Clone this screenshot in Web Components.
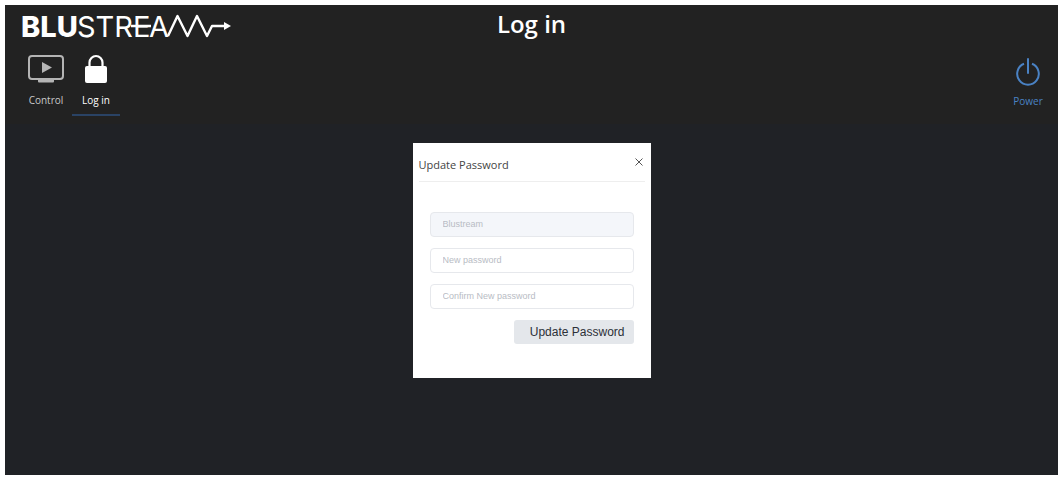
<!DOCTYPE html>
<html lang="en">
<head>
<meta charset="UTF-8">
<meta name="viewport" content="width=device-width, initial-scale=1.0">
<title>Log in</title>
<style>
    body {
        margin: 0;
        background: #fff;
        font-family: 'Open Sans', 'Noto Sans', sans-serif;
    }
</style>
</head>
<body>
<matrix-app>
    <app-header slot="header" heading="Log in">
        <nav-item icon="screen" label="Control"></nav-item>
        <nav-item icon="lock" label="Log in" active></nav-item>
        <nav-item slot="end" icon="power" label="Power"></nav-item>
    </app-header>
    <password-dialog heading="Update Password"></password-dialog>
</matrix-app>

<script>
    const ICONS = {
        screen: `
            <svg width="36" height="30" viewBox="0 0 36 30" aria-hidden="true">
                <rect x="1" y="2" width="34" height="23" rx="3" fill="none" stroke="#b4b4b4" stroke-width="2"/>
                <path d="M10 26h16v1.500q0 1-1 1H11q-1 0-1-1z" fill="#b4b4b4"/>
                <path d="M14 8l10 5.500L14 19z" fill="#b4b4b4"/>
            </svg>`,
        lock: `
            <svg width="24" height="30" viewBox="0 0 24 30" aria-hidden="true">
                <path d="M5.500 13V8.500a6.500 6.500 0 0 1 13 0V13" fill="none" stroke="#fff" stroke-width="2.200"/>
                <rect x="1" y="12" width="22" height="17" rx="2" fill="#fff"/>
            </svg>`,
        power: `
            <svg width="26" height="30" viewBox="0 0 26 30" aria-hidden="true" fill="none" stroke="#4a82c4" stroke-width="2">
                <path d="M9 6.800a10.800 10.800 0 1 0 8 0"/>
                <path d="M13 2v14" stroke-linecap="round"/>
            </svg>`
    };

    class MatrixApp extends HTMLElement {
        connectedCallback() {
            this.attachShadow({ mode: 'open' });
            this.shadowRoot.innerHTML = `
                <style>
                    :host {
                        display: flex;
                        box-sizing: border-box;
                        min-height: 100vh;
                        padding: 5px 5px 6px;
                    }

                    .screen {
                        flex: 1;
                        background: #202226;
                    }

                    main {
                        display: flex;
                        justify-content: center;
                        padding: 19px 0;
                    }
                </style>
                <div class="screen">
                    <slot name="header"></slot>
                    <main><slot></slot></main>
                </div>
            `;
        }
    }

    class BrandLogo extends HTMLElement {
        connectedCallback() {
            this.attachShadow({ mode: 'open' });
            this.shadowRoot.innerHTML = `
                <style>
                    :host {
                        display: block;
                    }

                    svg {
                        display: block;
                    }

                    text {
                        font-family: Inter, 'Open Sans', sans-serif;
                        font-size: 29px;
                        font-weight: 400;
                    }

                    .bold {
                        font-weight: 800;
                    }
                </style>
                <svg width="212" height="38" viewBox="-1 -6 212 38" fill="#fff" role="img" aria-label="Blustream">
                    <text class="bold" x="-1" y="24">BLU</text>
                    <text x="55" y="24">STR</text>
                    <text x="111" y="24">E</text>
                    <text x="127" y="24">A</text>
                    <path d="M109 13h20M146 23l9.500-20 10 20 9.500-20 10 20 5-10h13" fill="none" stroke="#fff" stroke-width="2.400" stroke-linejoin="round"/>
                    <path d="M202 9l7 4-7 4z"/>
                </svg>
            `;
        }
    }

    class AppHeader extends HTMLElement {
        connectedCallback() {
            this.attachShadow({ mode: 'open' });
            this.shadowRoot.innerHTML = `
                <style>
                    :host {
                        display: block;
                        background: #222;
                        color: #fff;
                    }

                    .top {
                        display: grid;
                        grid-template-columns: 1fr auto 1fr;
                        padding: 0 16px;
                    }

                    brand-logo {
                        padding-top: 2px;
                    }

                    h1 {
                        margin: 0;
                        font-size: 24px;
                        font-weight: 600;
                        line-height: 38px;
                    }

                    nav {
                        display: flex;
                        justify-content: space-between;
                        padding: 9px 6px 8px 17px;
                    }

                    .group {
                        display: flex;
                        gap: 2px;
                    }
                </style>
                <header>
                    <div class="top">
                        <brand-logo></brand-logo>
                        <h1>${this.getAttribute('heading')}</h1>
                    </div>
                    <nav>
                        <div class="group"><slot></slot></div>
                        <div class="group"><slot name="end"></slot></div>
                    </nav>
                </header>
            `;
        }
    }

    class NavItem extends HTMLElement {
        connectedCallback() {
            this.attachShadow({ mode: 'open' });
            this.shadowRoot.innerHTML = `
                <style>
                    :host {
                        display: block;
                    }

                    a {
                        display: flex;
                        flex-direction: column;
                        align-items: center;
                        box-sizing: border-box;
                        width: 48px;
                        color: #c8c8c8;
                        border-bottom: 2px solid transparent;
                        font-size: 10px;
                        line-height: 14px;
                        text-decoration: none;
                    }

                    svg {
                        display: block;
                    }

                    span {
                        padding: 9px 0 7px;
                    }

                    :host([active]) a {
                        color: #fff;
                        border-color: #2a4365;
                    }

                    :host([icon="power"]) a {
                        color: #4a82c4;
                    }

                    :host([icon="power"]) svg {
                        padding-top: 3px;
                    }

                    :host([icon="power"]) span {
                        padding: 7px 0 6px;
                    }
                </style>
                <a href="#${this.getAttribute('icon')}">
                    ${ICONS[this.getAttribute('icon')]}
                    <span>${this.getAttribute('label')}</span>
                </a>
            `;
        }
    }

    class PasswordDialog extends HTMLElement {
        connectedCallback() {
            this.attachShadow({ mode: 'open' });
            this.shadowRoot.innerHTML = `
                <style>
                    :host {
                        display: block;
                        box-sizing: border-box;
                        width: 238px;
                        padding: 0 6px 34px;
                        background: #fff;
                        color: #444;
                    }

                    .title {
                        display: flex;
                        align-items: center;
                        justify-content: space-between;
                        height: 38px;
                        border-bottom: 1px solid #eee;
                    }

                    h2 {
                        margin: 0;
                        padding-top: 6px;
                        font-size: 11px;
                        font-weight: 400;
                        line-height: 16px;
                    }

                    .close {
                        display: flex;
                        padding: 2px;
                        border: 0;
                        background: none;
                    }

                    form {
                        display: flex;
                        flex-direction: column;
                        gap: 11px;
                        padding: 30px 11px 0;
                    }

                    input {
                        box-sizing: border-box;
                        width: 100%;
                        height: 25px;
                        padding: 0 12px 2px;
                        border: 1px solid #e6e8ec;
                        border-radius: 4px;
                        background: #fff;
                        font: 9px 'Liberation Sans', sans-serif;
                    }

                    input::placeholder {
                        color: #b8bcc4;
                        opacity: 1;
                    }

                    input:disabled {
                        background: #f4f6fa;
                    }

                    .submit {
                        align-self: flex-end;
                        height: 24px;
                        padding: 0 9px 1px 16px;
                        border: 0;
                        border-radius: 3px;
                        background: #e4e7eb;
                        color: #2c3038;
                        font: 12px 'Liberation Sans', sans-serif;
                    }
                </style>
                <div class="title">
                    <h2>${this.getAttribute('heading')}</h2>
                    <button class="close" type="button" aria-label="Close">
                        <svg width="8" height="8" viewBox="0 0 8 8" fill="none" stroke="#555"><path d="M.5.5l7 7M7.500.5l-7 7"/></svg>
                    </button>
                </div>
                <form>
                    <input type="text" placeholder="Blustream" aria-label="User name" disabled>
                    <input type="password" placeholder="New password" aria-label="New password">
                    <input type="password" placeholder="Confirm New password" aria-label="Confirm New password">
                    <button class="submit" type="submit">Update Password</button>
                </form>
            `;

            this.initEvents();
        }

        initEvents() {
            this.shadowRoot.querySelector('.close').addEventListener('click', () => this.remove());
            this.shadowRoot.querySelector('form').addEventListener('submit', (e) => e.preventDefault());
        }
    }

    customElements.define('matrix-app', MatrixApp);
    customElements.define('brand-logo', BrandLogo);
    customElements.define('app-header', AppHeader);
    customElements.define('nav-item', NavItem);
    customElements.define('password-dialog', PasswordDialog);
</script>
</body>
</html>
